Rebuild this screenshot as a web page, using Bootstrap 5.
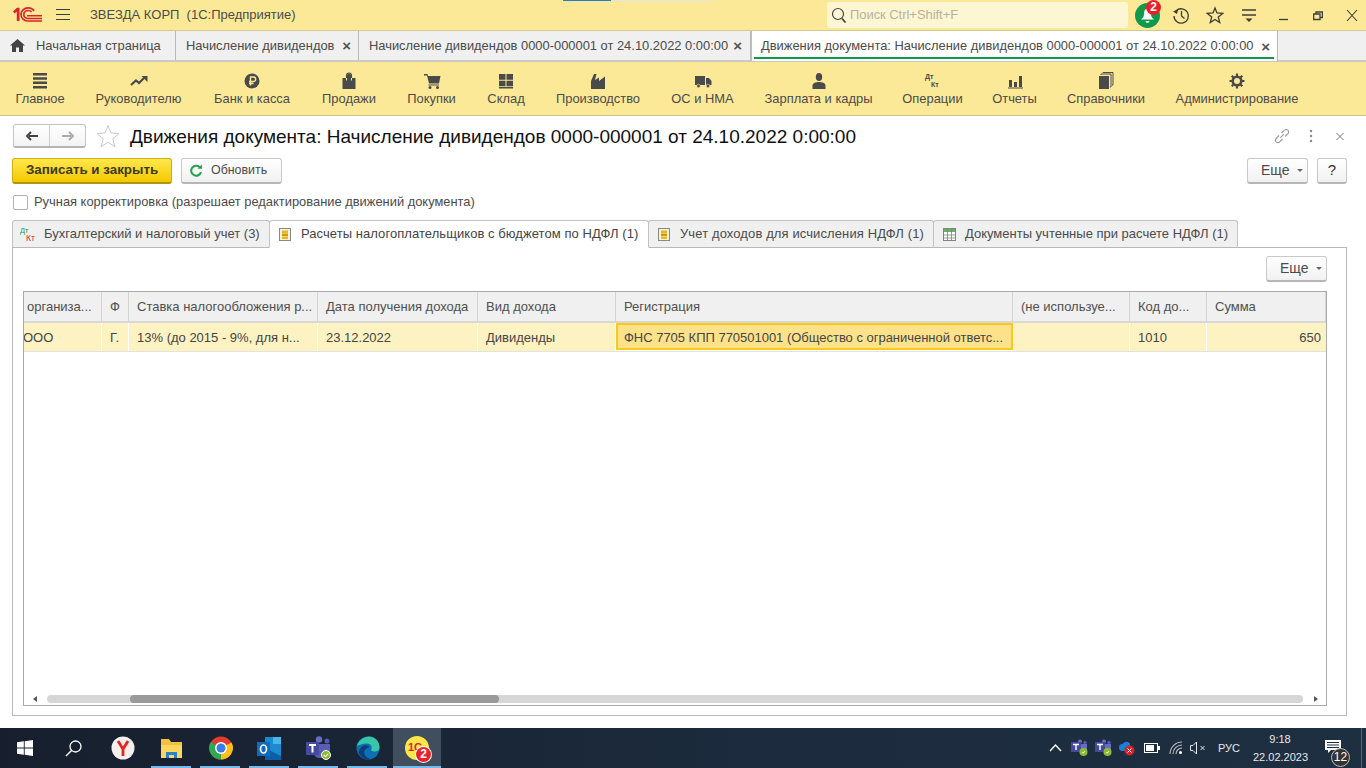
<!DOCTYPE html>
<html lang="ru"><head><meta charset="utf-8"><title>1С</title>
<link href="https://cdn.jsdelivr.net/npm/bootstrap@5.3.0/dist/css/bootstrap.min.css" rel="stylesheet">
<style>
html,body{height:768px;overflow:hidden}
body{font-family:"Liberation Sans",Arial,sans-serif;font-size:12.9px;color:#4b4b4b;width:1366px;background:#fff}
.app{height:768px}
.topbar{height:30px;background:#fbe997;position:relative;padding:0 8px 0 13px;flex:none}
.topstrip{position:absolute;top:0;left:563px;height:1px;width:48px;background:#1a7fd6}
.topstrip2{position:absolute;top:0;left:611px;height:1px;width:100px;background:#e6e6e6}
.burger{margin-left:14px;shape-rendering:crispEdges}
.apptitle{margin-left:20px;font-size:13px;white-space:pre}
.searchbox{margin-left:auto;width:301px;height:26px;background:#fdf6d2;border-radius:3px;color:#b7b29b;padding-left:4px;gap:3px}
.bell{position:relative;margin-left:7px;width:25px;height:25px;border-radius:50%;background:#0f9a4b}
.bdg{position:absolute;left:11px;top:-3px;width:15px;height:15px;border-radius:50%;background:#e8202a;color:#fff;font-weight:700;font-size:12px;line-height:15px;text-align:center}
.ti1{margin-left:12px}.ti2{margin-left:16px}.ti3{margin-left:17px}.ti4{margin-left:22px}.ti5{margin-left:24px}.ti6{margin-left:23px}
.tabsbar{height:32px;background:#f0f0f0;border-top:1px solid #d6c98e;border-bottom:2px solid #c9c9c9;flex:none}
.wintab{height:29px;padding:0 7px 0 10px;border-right:1px solid #b8b8b8;white-space:nowrap;color:#4b4b4b;flex:none;justify-content:space-between}
.wintab.home{width:176px;gap:11px;justify-content:flex-start}
.wt2{width:183px}
.wt3{width:392px;padding-right:8px}
.wintab.act{background:#fff;position:relative;border-left:1px solid #c0c0c0;padding:0 7px 0 9px;width:527px;height:30px}
.wintab.act::after{content:"";position:absolute;left:2px;right:3px;bottom:2px;height:2px;background:#0f9a4b}
.xx{font-size:15px;font-weight:700;color:#555;line-height:1}
.sections{height:54px;background:#fbe997;border-bottom:1px solid #cfc189;padding-left:16px;gap:31px;flex:none}
.sect{text-align:center;white-space:nowrap;display:flex;flex-direction:column;align-items:center;flex:none}
.sect svg{height:18px;width:18px;margin-top:10px;display:block;flex:none}
.sect span{margin-top:1px;line-height:15px;color:#4b4b4b}
.sect:nth-child(1){width:48px}.sect:nth-child(2){width:87px}.sect:nth-child(3){width:78px}.sect:nth-child(4){width:54px}.sect:nth-child(5){width:49px}.sect:nth-child(6){width:38px}.sect:nth-child(7){width:84px}.sect:nth-child(8){width:63px}.sect:nth-child(9){width:107px}.sect:nth-child(10){width:59px}.sect:nth-child(11){width:43px}.sect:nth-child(12){width:78px}.sect:nth-child(13){width:122px}
.formbody{height:612px;padding:0 12px;flex:none}
.navgrp{width:73px;height:24px;margin-left:1px;border:1px solid #c4c4c4;border-bottom:2px solid #b4b4b4;border-radius:3px;background:linear-gradient(#fff,#f3f3f3)}
.navgrp div{flex:1;height:100%}
.navgrp div:first-child{border-right:1px solid #cfcfcf}
.headrow{height:42px;padding-top:8px}
.favstar{margin-left:10px;flex:none}
.formtitle{font-size:19px;color:#111;margin-left:10px;white-space:nowrap;line-height:26px}
.headtools{gap:19px;margin-right:10px;height:24px}
.cmdrow{height:26px;gap:9px}
.gbtn{height:26px;border:1px solid #c9c9c9;border-bottom:2px solid #b6b6b6;border-radius:3px;background:linear-gradient(#fff,#f1f1f1);color:#4b4b4b;white-space:nowrap;font-size:13px}
.ybtn{width:160px;background:linear-gradient(#ffe84d,#f3c800);border-color:#d1ae14;border-bottom-color:#b19409;color:#3d3a1c;font-weight:700;font-size:13.350px}
.refbtn{width:101px;gap:9px;padding-left:8px;font-size:12.400px}
.morebtn{width:61px;gap:7px;padding-left:13px;font-size:14px}
.helpbtn{width:30px;margin-right:7px;font-size:15px;color:#333}
.chkrow{height:24px;margin-top:6px;gap:6px;padding-left:1px}
.chkbox{width:15px;height:15px;border:1px solid #b2b2b2;border-radius:2px;background:#fff}
.pagetabs{height:28px;margin-top:6px}
.ptab{height:28px;background:#f0f0f0;border:1px solid #c2c2c2;border-bottom:1px solid #b8b8b8;border-radius:3px 3px 0 0;padding:0 0 0 9px;white-space:nowrap;gap:10px;margin-right:-1px;flex:none;font-size:13px}
.ptab.on{background:#fff;border-bottom-color:#fff;position:relative;z-index:2;color:#444}
.pt1{width:258px;padding-left:7px;gap:7px}.pt2{width:380px;letter-spacing:.06px}.pt3{width:286px;letter-spacing:.11px}.pt4{width:305px;gap:9px}
.pagepane{height:469px;border:1px solid #b8b8b8;margin-top:-1px;padding:8px 0 0 10px;width:1335px}
.moreline{height:26px;width:1304px}
.tbl{width:1304px;height:415px;margin-top:9px;border:1px solid #aaa;position:relative;overflow:hidden;font-size:13px}
.trow{display:grid;grid-template-columns:78px 27px 189px 160px 138px 397px 117px 77px 119px}
.thd{height:31px;border-bottom:2px solid #d8d8d8}
.thd>div{background:#f0f0f0;border-right:1px solid #d4d4d4;padding:0 7px 0 8px;line-height:29px;white-space:nowrap;overflow:hidden;color:#4f4f4f}
.thd>div:first-child{padding-left:3px}
.tcell{height:29px;border-bottom:1px solid #e2e2e2}
.tcell>div{background:#fdf2c2;border-right:1px solid #fff;padding:0 7px 0 8px;line-height:29px;height:28px;white-space:nowrap;overflow:hidden;color:#454545}
.tcell>div:first-child{padding-left:0;text-indent:-1px}
.tcell>div.cur{background:#fde28a;border:2px solid #fbc81e;line-height:25px;padding-left:6px;height:27px;letter-spacing:-.02px}
.tcell>div.amt{padding-right:5px;text-align:right;border-right:0}
.scrollarea{position:absolute;left:0;right:0;bottom:2px;height:8px;padding:0 8px 0 9px}
.strack{position:relative;flex:1;height:8px;background:#d6d6d6;border-radius:4px;margin:0 11px 0 10px}
.sthumb{position:absolute;left:83px;width:369px;top:0;height:8px;background:#9a9a9a;border-radius:4px}
.taskbar{height:40px;background:linear-gradient(90deg,#171f2e,#1c2c3e 60%,#1e2f42);position:relative;color:#e8e8e8;flex:none}
.taskbar::after{content:"";position:absolute;right:4px;top:0;bottom:0;width:1px;background:#5b6775}
.tb{width:49px;height:40px;display:flex;align-items:center;justify-content:center;position:relative;flex:none}
.tb.ul::after{content:"";position:absolute;bottom:0;left:4px;right:5px;height:2px;background:#76b9ed}
.tb.cur1c{background:#414e5d;width:48px;margin-left:1px}
.tb.cur1c::after{content:"";position:absolute;bottom:0;left:0;right:0;height:2px;background:#76b9ed}
.b1c{position:absolute;left:23px;top:19px;width:15px;height:15px;border-radius:50%;background:#e8202a;color:#fff;font-size:12px;font-weight:700;line-height:15px;text-align:center;box-shadow:0 0 0 1px #fff}
.tray{margin-left:auto;margin-right:25px}
.tr1{margin-left:9px}.tr2{margin-left:7px}.tr3{margin-left:9px}.tr4{margin-left:12px}.tr5{margin-left:18px}
.lang{font-size:11px;width:23px;white-space:nowrap}
.clock{width:54px;text-align:center;font-size:11px;line-height:18px;color:#e8e8e8;white-space:nowrap}
.notif{position:relative;width:16px;height:12px;align-self:flex-start;margin-top:12px}
.notif svg{display:block}
.notifn{position:absolute;left:6px;top:8px;width:19px;height:19px;border-radius:50%;background:#333;border:1px solid #bbb;font-size:12px;line-height:17px;color:#fff;text-align:center}
</style></head><body>
<div class="app d-flex flex-column">
 <div class="topbar d-flex align-items-center">
  <div class="topstrip"></div><div class="topstrip2"></div>
  <svg width="29" height="16" viewBox="0 0 29 16"><path d="M0 4.500 4 .8H6.500V14H3.800V4.500L1.600 6.500Z" fill="#d8232a"/><path d="M21 4C20 2 17.500 .9 15 .9 11 .9 8 3.800 8 7.500S11 14 15 14H29" fill="none" stroke="#d8232a" stroke-width="1.700"/><path d="M18.500 5C17.800 4 16.500 3.500 15.200 3.500 12.800 3.500 10.800 5.300 10.800 7.500S12.800 11.500 15.200 11.500H29" fill="none" stroke="#d8232a" stroke-width="1.700"/><path d="M14 8H29V9.500H14Z" fill="#d8232a"/></svg>
  <svg class="burger" width="14" height="12" viewBox="0 0 14 12"><path d="M0 .5h14M0 5.500h14M0 10.500h14" stroke="#3c3c3c"/></svg>
  <div class="apptitle">ЗВЕЗДА КОРП  (1С:Предприятие)</div>
  <div class="searchbox d-flex align-items-center"><svg width="16" height="16" viewBox="0 0 16 16"><circle cx="7" cy="7" r="5.500" fill="none" stroke="#444" stroke-width="1.200"/><path d="m11 11.500 3.500 4" stroke="#444" stroke-width="1.800"/></svg><span>Поиск Ctrl+Shift+F</span></div>
  <div class="bell d-flex align-items-center justify-content-center"><svg width="15" height="17" viewBox="0 0 15 17"><path d="M7.500 1.500C10 1.500 11 4 11 7c0 2.500 1 4 3 5.500H1C3 11 4 9.500 4 7c0-3 1-5.500 3.500-5.500ZM5.500 14h4c0 1-1 1.800-2 1.800s-2-.8-2-1.800Z" fill="#fff"/></svg><div class="bdg">2</div></div>
  <svg class="ti1" width="18" height="20" viewBox="0 0 18 20"><path d="M4 6A7.200 7.200 0 1 1 2 11" fill="none" stroke="#3c3c3c" stroke-width="1.300"/><path d="M1 6.500 6.200 4.300 5 9Z" fill="#3c3c3c"/><path d="M9.500 6v5l3 2.500" fill="none" stroke="#3c3c3c" stroke-width="1.300"/></svg>
  <svg class="ti2" width="18" height="20" viewBox="0 0 18 20"><path d="m9 3 2 5 5.700.4-4.400 3.500 1.400 5.600L9 14.500 4.300 17.500l1.400-5.600L1.300 8.400 7 8Z" fill="none" stroke="#3c3c3c" stroke-width="1.300"/></svg>
  <svg class="ti3" width="16" height="20" viewBox="0 0 16 20"><path d="M1 5h14M1 10h14" stroke="#3c3c3c" stroke-width="1.300"/><path d="M4.500 13.500h7L8 17Z" fill="#3c3c3c"/></svg>
  <svg class="ti4" width="10" height="20" viewBox="0 0 10 20"><path d="M0 14.500h9" stroke="#3c3c3c" stroke-width="1.300"/></svg>
  <svg class="ti5" width="10" height="20" viewBox="0 0 10 20"><path d="M3 9V7H9.400V12.500H7M.7 9H7V14.500H.7Z" fill="none" stroke="#3c3c3c" stroke-width="1.300"/></svg>
  <svg class="ti6" width="12" height="20" viewBox="0 0 12 20"><path d="m1 5 10 11M11 5 1 16" stroke="#3c3c3c" stroke-width="1.100"/></svg>
 </div>
 <div class="tabsbar d-flex">
  <div class="wintab home d-flex align-items-center"><svg width="15" height="13" viewBox="0 0 15 13"><path d="M7.500 0 15 6.500h-2V13H9V8.500H6V13H2V6.500H0Z" fill="#444"/></svg><span>Начальная страница</span></div>
  <div class="wintab wt2 d-flex align-items-center"><span>Начисление дивидендов</span><span class="xx">×</span></div>
  <div class="wintab wt3 d-flex align-items-center"><span>Начисление дивидендов 0000-000001 от 24.10.2022 0:00:00</span><span class="xx">×</span></div>
  <div class="wintab act d-flex align-items-center"><span>Движения документа: Начисление дивидендов 0000-000001 от 24.10.2022 0:00:00</span><span class="xx">×</span></div>
 </div>
 <div class="sections d-flex">
  <div class="sect"><svg viewBox="0 0 18 18"><path d="M2 1h14v2.500H2zM2 5.300h14v2.500H2zM2 9.600h14v2.500H2zM2 13.900h14v2.500H2z" fill="#4a4a4a"/></svg><span>Главное</span></div>
  <div class="sect"><svg viewBox="0 0 18 18"><path d="m1 13 5-4.500 3 2.500 5-5" fill="none" stroke="#4a4a4a" stroke-width="2.200"/><path d="M11.500 4H17.500V10Z" fill="#4a4a4a"/></svg><span>Руководителю</span></div>
  <div class="sect"><svg viewBox="0 0 18 18"><circle cx="9" cy="9" r="7.500" fill="#4a4a4a"/><path d="M7.500 13.500V5H10.500a2 2 0 0 1 0 4.500H6M6 11.500h4.500" fill="none" stroke="#fbe997" stroke-width="1.400"/></svg><span>Банк и касса</span></div>
  <div class="sect"><svg viewBox="0 0 18 18"><path d="M2.500 6H6V8.500H7V3.500a2 2 0 0 1 4 0V8.500H12V6H15.500V17H2.500Z" fill="#4a4a4a"/><path d="M6.500 6V3.500a2.500 2.500 0 0 1 5 0V6" fill="none" stroke="#4a4a4a" stroke-width="1.100"/></svg><span>Продажи</span></div>
  <div class="sect"><svg viewBox="0 0 18 18"><path d="M1 2h3.500l.5 2H17.500L16 11.500H6L4 3.500H1Z" fill="#4a4a4a"/><path d="M5.500 13H16" stroke="#4a4a4a"/><circle cx="7" cy="15.500" r="1.500" fill="#4a4a4a"/><circle cx="14.500" cy="15.500" r="1.500" fill="#4a4a4a"/></svg><span>Покупки</span></div>
  <div class="sect"><svg viewBox="0 0 18 18"><path d="M2 2H8.500V7.800H2zM9.500 2H16V7.800H9.500zM2 8.800H8.500V14.300H2zM9.500 8.800H16V14.300H9.500zM2 15H16V16.500H2z" fill="#4a4a4a"/></svg><span>Склад</span></div>
  <div class="sect"><svg viewBox="0 0 18 18"><path d="M2 17V9L5 2H7.500L6 8 10 5.500V9L16 4.500V17Z" fill="#4a4a4a"/></svg><span>Производство</span></div>
  <div class="sect"><svg viewBox="0 0 18 18"><path d="M1 4H11V13H1ZM12 6h3l2.500 3V13H12Z" fill="#4a4a4a"/><circle cx="4.500" cy="14" r="1.800" fill="#4a4a4a" stroke="#fbe997" stroke-width=".6"/><circle cx="14" cy="14" r="1.800" fill="#4a4a4a" stroke="#fbe997" stroke-width=".6"/></svg><span>ОС и НМА</span></div>
  <div class="sect"><svg viewBox="0 0 18 18"><ellipse cx="9" cy="5" rx="3.200" ry="4" fill="#4a4a4a"/><path d="M2.500 17V13.500C2.500 11 6 10 9 10s6.500 1 6.500 3.500V17Z" fill="#4a4a4a"/></svg><span>Зарплата и кадры</span></div>
  <div class="sect"><svg viewBox="0 0 18 18"><text x="1" y="6.500" font-size="7" font-weight="700" fill="#4a4a4a" font-family="Liberation Sans">Дт</text><text x="7" y="15" font-size="7" font-weight="700" fill="#4a4a4a" font-family="Liberation Sans">Кт</text></svg><span>Операции</span></div>
  <div class="sect"><svg viewBox="0 0 18 18"><path d="M3 8h3v7H3zM8 10h3v5H8zM13 4h3v11h-3zM2 15.500h15v1H2z" fill="#4a4a4a"/></svg><span>Отчеты</span></div>
  <div class="sect"><svg viewBox="0 0 18 18"><path d="M2 4H12V17H2Z" fill="#4a4a4a"/><path d="M4 3V2H14V15H13M6 1V.5H16V13H15" fill="none" stroke="#4a4a4a"/></svg><span>Справочники</span></div>
  <div class="sect"><svg viewBox="0 0 18 18"><circle cx="9" cy="9" r="4.300" fill="none" stroke="#4a4a4a" stroke-width="2.600"/><path d="M9 1.500v3M9 13.500v3M1.500 9h3M13.500 9h3M3.700 3.700 5.800 5.800M12.200 12.200l2.100 2.100M14.300 3.700 12.200 5.800M5.800 12.200 3.700 14.300" stroke="#4a4a4a" stroke-width="2.200"/></svg><span>Администрирование</span></div>
 </div>
 <div class="formbody">
  <div class="headrow d-flex align-items-start">
   <div class="navgrp d-flex"><div class="d-flex align-items-center justify-content-center"><svg width="14" height="10" viewBox="0 0 14 10"><path d="M13 5H4M6 1 2 5l4 4" fill="none" stroke="#444" stroke-width="2"/></svg></div><div class="d-flex align-items-center justify-content-center"><svg width="14" height="10" viewBox="0 0 14 10"><path d="M1 5h9M8 1l4 4-4 4" fill="none" stroke="#aaa" stroke-width="2"/></svg></div></div>
   <svg class="favstar" width="24" height="24" viewBox="0 0 24 24"><path d="m12 1.500 3 7.500 8 .6-6.200 5.200 2 7.800L12 18.400l-6.800 4.200 2-7.800L1 9.600 9 9Z" fill="none" stroke="#c9c9c9"/></svg>
   <div class="formtitle">Движения документа: Начисление дивидендов 0000-000001 от 24.10.2022 0:00:00</div>
   <div class="headtools ms-auto d-flex align-items-center">
    <svg width="16" height="16" viewBox="0 0 16 16"><path d="M6.300 9.700 9.700 6.300M5 7.500 2.200 10.500a2.400 2.400 0 0 0 3.400 3.400L8.500 11M7.500 5 10.500 2.200A2.400 2.400 0 0 1 13.900 5.600L11 8.500" fill="none" stroke="#999" stroke-width="1.100"/></svg>
    <svg width="4" height="14" viewBox="0 0 4 14"><circle cx="2" cy="2" r="1.200" fill="#888"/><circle cx="2" cy="7" r="1.200" fill="#888"/><circle cx="2" cy="12" r="1.200" fill="#888"/></svg>
    <svg class="ms-1" width="8" height="9" viewBox="0 0 8 9"><path d="m.5 1 7 7M7.500 1l-7 7" stroke="#777"/></svg>
   </div>
  </div>
  <div class="cmdrow d-flex align-items-center">
   <div class="gbtn ybtn d-flex align-items-center justify-content-center">Записать и закрыть</div>
   <div class="gbtn refbtn d-flex align-items-center"><svg width="12" height="13" viewBox="0 0 12 13"><path d="M10 3.500A5 5 0 1 0 11 8" fill="none" stroke="#22a24a" stroke-width="2"/><path d="M7.500 4.800H12V.5Z" fill="#22a24a"/></svg><span>Обновить</span></div>
   <div class="gbtn morebtn d-flex align-items-center ms-auto"><span>Еще</span><svg width="6" height="3" viewBox="0 0 6 3"><path d="M0 0h6L3 3Z" fill="#666"/></svg></div>
   <div class="gbtn helpbtn d-flex align-items-center justify-content-center">?</div>
  </div>
  <div class="chkrow d-flex align-items-center"><div class="chkbox"></div><div>Ручная корректировка (разрешает редактирование движений документа)</div></div>
  <div class="pagetabs d-flex">
   <div class="ptab pt1 d-flex align-items-center"><svg width="17" height="16" viewBox="0 0 17 16"><text x="0" y="7" font-size="7.500" fill="#1d9a4a" font-family="Liberation Sans">Дт</text><text x="6" y="15" font-size="8.500" fill="#d8232a" font-family="Liberation Sans">Кт</text></svg><span>Бухгалтерский и налоговый учет (3)</span></div>
   <div class="ptab pt2 on d-flex align-items-center"><svg width="12" height="13" viewBox="0 0 12 13"><rect x=".5" y=".5" width="11" height="12" fill="#f5f2e4" stroke="#8a8a7a"/><path d="M3 2.500h6v2.500H3z" fill="#e9b90e"/><path d="M3 5.500h6v2.500H3z" fill="#c99a0a"/><path d="M3 8.500h6V11H3z" fill="#e9b90e"/></svg><span>Расчеты налогоплательщиков с бюджетом по НДФЛ (1)</span></div>
   <div class="ptab pt3 d-flex align-items-center"><svg width="12" height="13" viewBox="0 0 12 13"><rect x=".5" y=".5" width="11" height="12" fill="#f5f2e4" stroke="#8a8a7a"/><path d="M3 2.500h6v2.500H3z" fill="#e9b90e"/><path d="M3 5.500h6v2.500H3z" fill="#c99a0a"/><path d="M3 8.500h6V11H3z" fill="#e9b90e"/></svg><span>Учет доходов для исчисления НДФЛ (1)</span></div>
   <div class="ptab pt4 d-flex align-items-center"><svg width="13" height="13" viewBox="0 0 13 13"><rect x=".5" y=".5" width="12" height="12" fill="#fff" stroke="#7a8a7a"/><path d="M1 1h11v3H1z" fill="#6bab6b"/><path d="M4.500 1v11M8.500 1v11M1 7h11M1 10h11" stroke="#7a8a7a" stroke-width=".8"/></svg><span>Документы учтенные при расчете НДФЛ (1)</span></div>
  </div>
  <div class="pagepane">
   <div class="moreline d-flex justify-content-end"><div class="gbtn morebtn d-flex align-items-center"><span>Еще</span><svg width="6" height="3" viewBox="0 0 6 3"><path d="M0 0h6L3 3Z" fill="#666"/></svg></div></div>
   <div class="tbl">
    <div class="trow thd"><div>организа...</div><div>Ф</div><div>Ставка налогообложения р...</div><div>Дата получения дохода</div><div>Вид дохода</div><div>Регистрация</div><div>(не используе...</div><div>Код до...</div><div>Сумма</div></div>
    <div class="trow tcell"><div>ООО</div><div>Г.</div><div>13% (до 2015 - 9%, для н...</div><div>23.12.2022</div><div>Дивиденды</div><div class="cur">ФНС 7705 КПП 770501001 (Общество с ограниченной ответс...</div><div></div><div>1010</div><div class="amt">650</div></div>
    <div class="scrollarea d-flex align-items-center"><svg width="4" height="6" viewBox="0 0 4 6"><path d="M4 0v6L0 3Z" fill="#555"/></svg><div class="strack"><div class="sthumb"></div></div><svg width="4" height="6" viewBox="0 0 4 6"><path d="M0 0v6l4-3Z" fill="#555"/></svg></div>
   </div>
  </div>
 </div>
 <div class="taskbar d-flex">
  <div class="tb"><svg width="16" height="16" viewBox="0 0 16 16"><path d="M0 2.300 6.800 1.300V7.600H0ZM7.700 1.200 16 0V7.600H7.700ZM0 8.400H6.800V14.700L0 13.700ZM7.700 8.400H16V16L7.700 14.800Z" fill="#fff"/></svg></div>
  <div class="tb"><svg width="17" height="17" viewBox="0 0 17 17"><circle cx="10.500" cy="6.500" r="5.500" fill="none" stroke="#fff" stroke-width="1.300"/><path d="M6.500 10.500 1 16" stroke="#fff" stroke-width="1.500"/></svg></div>
  <div class="tb"><svg width="24" height="24" viewBox="0 0 24 24"><circle cx="12" cy="12" r="11.500" fill="#f3efee"/><path d="M7 5 12 13 17 5M12 13V20" fill="none" stroke="#e52620" stroke-width="2.800"/></svg></div>
  <div class="tb ul"><svg width="23" height="19" viewBox="0 0 23 19"><path d="M1 0h8l2 3h11v15H1Z" fill="#f4c13d"/><path d="M1 6h21v13H1Z" fill="#fbd85d"/><path d="M6 19v-6h11v6h-3v-3H9v3Z" fill="#2b7fc8"/></svg></div>
  <div class="tb ul"><svg width="24" height="24" viewBox="0 0 24 24"><circle cx="12" cy="12" r="11.500" fill="#e33b2e"/><path d="M12 12 22.500 6.500A11.500 11.500 0 0 1 12 23.500Z" fill="#fbc116"/><path d="M12 12V23.500A11.500 11.500 0 0 1 1.800 6Z" fill="#2fa84f"/><circle cx="12" cy="12" r="6" fill="#fff"/><circle cx="12" cy="12" r="4.500" fill="#3b7de8"/></svg></div>
  <div class="tb ul"><svg width="25" height="23" viewBox="0 0 25 23"><path d="M8 0h16v20H8Z" fill="#1a8ad3"/><path d="M16 0h8v7h-8z" fill="#49b5ea"/><path d="M8 11 24 19v4H8Z" fill="#0a5fa8"/><rect x="0" y="5" width="13" height="14" fill="#0f6cbd"/><ellipse cx="6.500" cy="12" rx="3" ry="4" fill="none" stroke="#fff" stroke-width="1.700"/></svg></div>
  <div class="tb ul"><svg width="26" height="24" viewBox="0 0 26 24"><circle cx="13" cy="3.500" r="3.200" fill="#6a6cc4"/><circle cx="21" cy="5" r="2.500" fill="#5558af"/><path d="M8 8h16v9a5 5 0 0 1-5 5h-6a5 5 0 0 1-5-5Z" fill="#5a5db5"/><rect x="0" y="6" width="13" height="13" fill="#444a9e"/><path d="M3 9h7M6.500 9v7.500" stroke="#fff" stroke-width="2"/><circle cx="20" cy="19" r="4.500" fill="#8dbb2d" stroke="#fff"/><path d="m17.800 19 1.700 1.800 2.800-3.300" fill="none" stroke="#fff" stroke-width="1.100"/></svg></div>
  <div class="tb ul"><svg width="24" height="24" viewBox="0 0 24 24"><circle cx="12" cy="12" r="11.500" fill="#0f6fb3"/><path d="M.6 10.500C2.500 4 8.500.5 13 .5 19.500.5 23.500 5.500 23.500 11.500c0 3-2.500 4-5 4-3 0-4-1-3-2.500C16.500 10.500 14.500 7.500 11 7.500 6.500 7.500 1.500 9.500.6 10.500Z" fill="#37c6a8"/><path d="M13.500 11.500c-3 0-6 2.500-5 6.500 .8 3 4 4.800 7 5.200C10.500 24.500 4.500 22 2.500 16.500 4.500 8.500 11.500 7.500 13.500 11.500Z" fill="#0a3d7a"/></svg></div>
  <div class="tb cur1c"><svg width="24" height="24" viewBox="0 0 24 24"><circle cx="12" cy="12" r="12" fill="#fde64a"/><text x="3" y="15" font-size="11" font-weight="700" fill="#d8232a" font-family="Liberation Sans">1С</text></svg><div class="b1c">2</div></div>
  <div class="tray d-flex align-items-center">
   <svg width="13" height="8" viewBox="0 0 13 8"><path d="m1 7 5.500-6L12 7" fill="none" stroke="#fff" stroke-width="1.300"/></svg>
   <svg class="tr1" width="17" height="18" viewBox="0 0 17 18"><circle cx="9" cy="2.500" r="2" fill="#6a6cc4"/><circle cx="14" cy="3.500" r="1.700" fill="#5558af"/><path d="M5 5h11v7H5z" fill="#6a6cc4"/><rect y="3" width="10" height="10" fill="#444a9e"/><path d="M2 5.500h6M5 5.500v5.500" stroke="#fff" stroke-width="1.400"/><circle cx="12.500" cy="13" r="4" fill="#8dbb2d"/><path d="m10.800 13 1.300 1.300 2-2.300" fill="none" stroke="#fff" stroke-width=".9"/></svg>
   <svg class="tr2" width="17" height="18" viewBox="0 0 17 18"><circle cx="9" cy="2.500" r="2" fill="#6a6cc4"/><circle cx="14" cy="3.500" r="1.700" fill="#5558af"/><path d="M5 5h11v7H5z" fill="#6a6cc4"/><rect y="3" width="10" height="10" fill="#444a9e"/><path d="M2 5.500h6M5 5.500v5.500" stroke="#fff" stroke-width="1.400"/><circle cx="12.500" cy="13" r="4" fill="#8dbb2d"/><path d="m10.800 13 1.300 1.300 2-2.300" fill="none" stroke="#fff" stroke-width=".9"/></svg>
   <svg class="tr2" width="16" height="16" viewBox="0 0 16 16"><path d="M0 7.500A3.500 3.500 0 0 1 3.500 4 4.500 4.500 0 0 1 11 3.500V11H3A3 3 0 0 1 0 7.500Z" fill="#1a7fd6"/><circle cx="10.500" cy="10.500" r="5" fill="#d8232a"/><path d="m8.500 8.500 4 4M12.500 8.500l-4 4" stroke="#fff"/></svg>
   <svg class="tr3" width="16" height="10" viewBox="0 0 16 10"><rect x=".5" y=".5" width="13" height="9" fill="none" stroke="#fff"/><rect x="2" y="2" width="8" height="6" fill="#fff"/><rect x="14" y="3" width="2" height="4" fill="#fff"/></svg>
   <svg class="tr3" width="14" height="14" viewBox="0 0 14 14"><path d="M1 13A12 12 0 0 1 13 1M4 13A9 9 0 0 1 13 4M7 13A6 6 0 0 1 13 7" fill="none" stroke="#bbb" stroke-width="1.100"/><circle cx="11.500" cy="11.500" r="1.500" fill="#fff"/></svg>
   <svg class="tr2" width="16" height="14" viewBox="0 0 16 14"><path d="M.5 4.500h2.500L6.500 1v12L3 9.500H.5Z" fill="none" stroke="#e8e8e8"/><path d="m10.500 5 4 4M14.500 5l-4 4" stroke="#e8e8e8"/></svg>
   <div class="lang tr4">РУС</div>
   <div class="clock tr4">9:18<br>22.02.2023</div>
   <div class="notif tr5"><svg width="16" height="13" viewBox="0 0 16 13"><path d="M0 0h16v10H6L3 13V10H0Z" fill="#fff"/><path d="M2 2.500h12M2 5h12M2 7.500h12" stroke="#1c2c3e"/></svg><div class="notifn">12</div></div>
  </div>
 </div>
</div>
</body></html>
